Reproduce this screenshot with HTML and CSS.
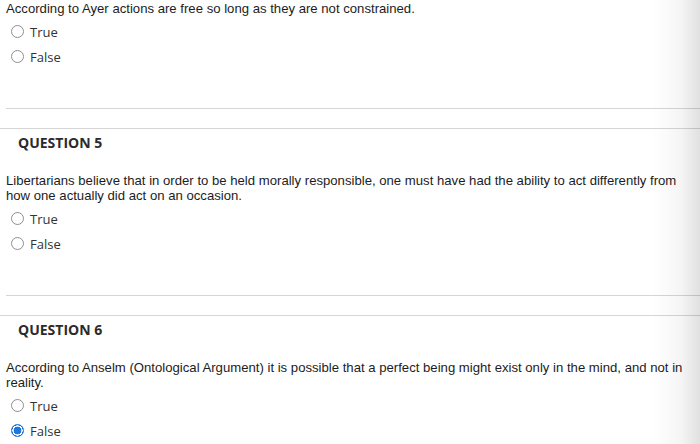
FILE: index.html
```html
<!DOCTYPE html>
<html>
<head>
<meta charset="utf-8">
<link rel="stylesheet" href="styles.css">
</head>
<body>
<div class="page">
  <div class="question first">
    <p class="prompt">According to Ayer actions are free so long as they are not constrained.</p>
    <ul class="opts">
      <li><span class="radio"></span>True</li>
      <li><span class="radio"></span>False</li>
    </ul>
  </div>
  <div class="sep-inner"></div>
  <div class="sep-outer"></div>

  <div class="question">
    <h2 class="qhead">QUESTION 5</h2>
    <p class="prompt">Libertarians believe that in order to be held morally responsible, one must have had the ability to act differently from how one actually did act on an occasion.</p>
    <ul class="opts">
      <li><span class="radio"></span>True</li>
      <li><span class="radio"></span>False</li>
    </ul>
  </div>
  <div class="sep-inner"></div>
  <div class="sep-outer"></div>

  <div class="question">
    <h2 class="qhead">QUESTION 6</h2>
    <p class="prompt">According to Anselm (Ontological Argument) it is possible that a perfect being might exist only in the mind, and not in reality.</p>
    <ul class="opts">
      <li><span class="radio"></span>True</li>
      <li><span class="radio checked"></span>False</li>
    </ul>
  </div>
</div>
<div class="edge-shade"></div>
</body>
</html>
```
FILE: styles.css
```css
html, body {
  margin: 0;
  padding: 0;
  background: #ffffff;
}
body {
  width: 700px;
  height: 444px;
  overflow: hidden;
  position: relative;
}
.page {
  display: flex;
  flex-direction: column;
}
.question {
  padding-left: 6px;
  width: 682px;
}
.first {
  padding-top: 1px;
}
.prompt {
  margin: 0;
  font-family: "Liberation Sans", Arial, sans-serif;
  font-size: 13.15px;
  line-height: 15px;
  color: #1c1c1c;
}
.qhead {
  margin: 5px 0 21px 12px;
  font-family: "Open Sans", sans-serif;
  font-weight: 700;
  font-size: 14px;
  line-height: 18px;
  color: #2b2b2b;
}
.opts {
  list-style: none;
  margin: 3px 0 0 0;
  padding: 0;
}
.opts li {
  display: flex;
  align-items: center;
  height: 25px;
  padding-left: 5px;
  gap: 6px;
  font-family: "Open Sans", sans-serif;
  font-size: 13px;
  color: #333333;
}
.radio {
  box-sizing: border-box;
  width: 13px;
  height: 13px;
  border-radius: 50%;
  border: 1px solid #8f8f8f;
  background: #ffffff;
}
.radio.checked {
  border: 1px solid #1a6fd6;
  background: radial-gradient(circle, #1f78e0 0 3.6px, #ffffff 4.2px 5px, #1a6fd6 5.4px);
}
.sep-inner {
  margin: 39px 0 0 6px;
  height: 1px;
  background: #d6d6d6;
}
.sep-outer {
  margin-top: 19px;
  height: 1px;
  background: #d6d6d6;
}
.edge-shade {
  position: absolute;
  top: 0;
  right: 0;
  width: 48px;
  height: 444px;
  background: linear-gradient(to right, rgba(0,0,0,0), rgba(0,0,0,0.04) 60%, rgba(0,0,0,0.12));
  pointer-events: none;
}
```
